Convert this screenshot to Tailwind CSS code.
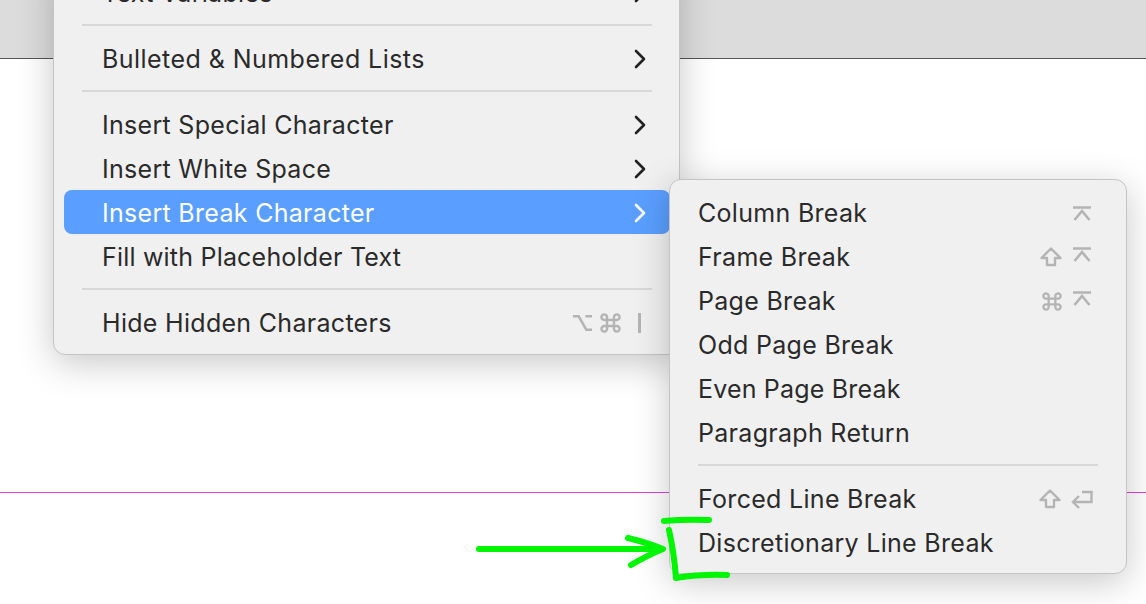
<!doctype html>
<html>
<head>
<meta charset="utf-8">
<title>Type menu</title>
<script src="https://cdn.jsdelivr.net/npm/@tailwindcss/browser@4"></script>
</head>
<body class="bg-white">
<div class="relative w-[1146px] h-[604px] overflow-hidden bg-white font-['Inter','Liberation_Sans',sans-serif] text-[25px] tracking-[0.3px] text-[#2a2a2a]">
  <!-- window chrome behind the menus -->
  <div class="h-[59px] bg-[#dcdcdc] border-b border-[#555555]"></div>
  <div class="mt-[433px] h-px bg-[#e23fe0]"></div>

  <!-- main menu -->
  <div class="absolute left-[53px] top-[-41px] w-[627px] py-[10px] bg-[#f0f0f0] rounded-[12px] border border-[#c4c4c4] shadow-[0_8px_36px_rgba(0,0,0,0.22)]">
    <div class="flex items-center justify-between h-[44px] ml-[10px] mr-[9px] pt-[2px] pl-[38px] pr-[24px]">
      <span class="mt-[2px]">Text Variables</span>
      <svg class="w-[12px] h-[20px]" viewBox="0 0 12 20" fill="none" stroke="#222" stroke-width="2.6" stroke-linecap="round" stroke-linejoin="round"><path d="M2 2l8 8-8 8"/></svg>
    </div>
    <div class="h-[2px] ml-[28px] mr-[27px] my-[10px] bg-[#d8d8d8]"></div>
    <div class="flex items-center justify-between h-[44px] ml-[10px] mr-[9px] pt-[2px] pl-[38px] pr-[24px]">
      <span class="mt-[2px] tracking-[0.45px]">Bulleted &amp; Numbered Lists</span>
      <svg class="w-[12px] h-[20px]" viewBox="0 0 12 20" fill="none" stroke="#222" stroke-width="2.6" stroke-linecap="round" stroke-linejoin="round"><path d="M2 2l8 8-8 8"/></svg>
    </div>
    <div class="h-[2px] ml-[28px] mr-[27px] my-[10px] bg-[#d8d8d8]"></div>
    <div class="flex items-center justify-between h-[44px] ml-[10px] mr-[9px] pt-[2px] pl-[38px] pr-[24px]">
      <span class="mt-[2px]">Insert Special Character</span>
      <svg class="w-[12px] h-[20px]" viewBox="0 0 12 20" fill="none" stroke="#222" stroke-width="2.6" stroke-linecap="round" stroke-linejoin="round"><path d="M2 2l8 8-8 8"/></svg>
    </div>
    <div class="flex items-center justify-between h-[44px] ml-[10px] mr-[9px] pt-[2px] pl-[38px] pr-[24px]">
      <span class="mt-[2px]">Insert White Space</span>
      <svg class="w-[12px] h-[20px]" viewBox="0 0 12 20" fill="none" stroke="#222" stroke-width="2.6" stroke-linecap="round" stroke-linejoin="round"><path d="M2 2l8 8-8 8"/></svg>
    </div>
    <div class="flex items-center justify-between h-[44px] ml-[10px] mr-[9px] pt-[2px] pl-[38px] pr-[24px] rounded-[8px] bg-[#5a9fff] text-white">
      <span class="mt-[2px]">Insert Break Character</span>
      <svg class="w-[12px] h-[20px]" viewBox="0 0 12 20" fill="none" stroke="#fff" stroke-width="2.6" stroke-linecap="round" stroke-linejoin="round"><path d="M2 2l8 8-8 8"/></svg>
    </div>
    <div class="flex items-center h-[44px] ml-[10px] mr-[9px] pt-[2px] pl-[38px] pr-[24px]">
      <span class="mt-[2px] tracking-[0.2px]">Fill with Placeholder Text</span>
    </div>
    <div class="h-[2px] ml-[28px] mr-[27px] my-[10px] bg-[#d8d8d8]"></div>
    <div class="flex items-center justify-between h-[44px] ml-[10px] mr-[9px] pt-[2px] pl-[38px] pr-[29px]">
      <span class="mt-[2px]">Hide Hidden Characters</span>
      <div class="flex items-center gap-[7px] text-[#b4b4b4]">
        <svg class="w-[21px] h-[20px]" viewBox="0 0 22 20" fill="none" stroke="currentColor" stroke-width="2.6"><path d="M1 3h6l8 14h6M14 3h7"/></svg>
        <svg class="w-[21px] h-[20px]" viewBox="0 0 21 20" fill="none" stroke="currentColor" stroke-width="2.4"><path d="M7 7h7v6H7zM7 7V4.500A2.800 2.800 0 1 0 4.300 7H7M14 7V4.500A2.800 2.800 0 1 1 16.700 7H14M7 13v2.500A2.800 2.800 0 1 1 4.300 13H7M14 13v2.500A2.800 2.800 0 1 0 16.700 13H14"/></svg>
        <svg class="ml-[10px] w-[3px] h-[20px]" viewBox="0 0 3 20" fill="currentColor"><rect width="3" height="20"/></svg>
      </div>
    </div>
  </div>

  <!-- Insert Break Character submenu -->
  <div class="absolute left-[669px] top-[179px] w-[458px] pt-[10px] pb-[9px] bg-[#f0f0f0] rounded-[12px] border border-[#c4c4c4] shadow-[0_8px_36px_rgba(0,0,0,0.22)]">
    <div class="flex items-center justify-between h-[44px] pt-[2px] pl-[28px] pr-[35px]">
      <span class="mt-[2px]">Column Break</span>
      <svg class="w-[18px] h-[15px] text-[#b4b4b4]" viewBox="0 0 18 15" fill="none" stroke="currentColor" stroke-width="2.6"><path d="M0 1.500h18M1.500 14L9 5l7.500 9"/></svg>
    </div>
    <div class="flex items-center justify-between h-[44px] pt-[2px] pl-[28px] pr-[35px]">
      <span class="mt-[2px]">Frame Break</span>
      <div class="flex items-center gap-[11px] text-[#b4b4b4]">
        <svg class="w-[22px] h-[20px]" viewBox="0 0 22 20" fill="none" stroke="currentColor" stroke-width="2.4" stroke-linejoin="round"><path d="M11 1.500L1.500 11H7v7h8v-7h5.500z"/></svg>
        <svg class="w-[18px] h-[15px] -mt-[5px]" viewBox="0 0 18 15" fill="none" stroke="currentColor" stroke-width="2.6"><path d="M0 1.500h18M1.500 14L9 5l7.500 9"/></svg>
      </div>
    </div>
    <div class="flex items-center justify-between h-[44px] pt-[2px] pl-[28px] pr-[35px]">
      <span class="mt-[2px]">Page Break</span>
      <div class="flex items-center gap-[11px] text-[#b4b4b4]">
        <svg class="w-[20px] h-[19px]" viewBox="0 0 21 20" fill="none" stroke="currentColor" stroke-width="2.4"><path d="M7 7h7v6H7zM7 7V4.500A2.800 2.800 0 1 0 4.300 7H7M14 7V4.500A2.800 2.800 0 1 1 16.700 7H14M7 13v2.500A2.800 2.800 0 1 1 4.300 13H7M14 13v2.500A2.800 2.800 0 1 0 16.700 13H14"/></svg>
        <svg class="w-[18px] h-[15px] -mt-[5px]" viewBox="0 0 18 15" fill="none" stroke="currentColor" stroke-width="2.6"><path d="M0 1.500h18M1.500 14L9 5l7.500 9"/></svg>
      </div>
    </div>
    <div class="flex items-center h-[44px] pt-[2px] pl-[28px]"><span class="mt-[2px]">Odd Page Break</span></div>
    <div class="flex items-center h-[44px] pt-[2px] pl-[28px]"><span class="mt-[2px] tracking-[0.18px]">Even Page Break</span></div>
    <div class="flex items-center h-[44px] pt-[2px] pl-[28px]"><span class="mt-[2px]">Paragraph Return</span></div>
    <div class="h-[2px] ml-[28px] mr-[28px] my-[10px] bg-[#d8d8d8]"></div>
    <div class="flex items-center justify-between h-[44px] pt-[2px] pl-[28px] pr-[33px]">
      <span class="mt-[2px]">Forced Line Break</span>
      <div class="flex items-center gap-[10px] text-[#b4b4b4]">
        <svg class="w-[22px] h-[20px]" viewBox="0 0 22 20" fill="none" stroke="currentColor" stroke-width="2.4" stroke-linejoin="round"><path d="M11 1.500L1.500 11H7v7h8v-7h5.500z"/></svg>
        <svg class="w-[22px] h-[19px]" viewBox="0 0 22 19" fill="none" stroke="currentColor" stroke-width="2.4"><path d="M11 2h9.500v10H2M8 6l-6 6 6 6"/></svg>
      </div>
    </div>
    <div class="flex items-center h-[44px] pt-[2px] pl-[28px]"><span class="mt-[2px]">Discretionary Line Break</span></div>
  </div>

  <!-- green hand-drawn annotation -->
  <svg class="absolute left-0 top-0 w-[1146px] h-[604px] pointer-events-none" viewBox="0 0 1146 604" fill="none" stroke="#00f500" stroke-width="6" stroke-linecap="round" stroke-linejoin="round">
    <path d="M479 549H662"/>
    <path d="M628 538Q648 543 663 549Q648 555 631 565"/>
    <path d="M664 521Q685 519 709 520"/>
    <path d="M669 530Q674 552 676 578Q700 574 727 575"/>
  </svg>
</div>
</body>
</html>
